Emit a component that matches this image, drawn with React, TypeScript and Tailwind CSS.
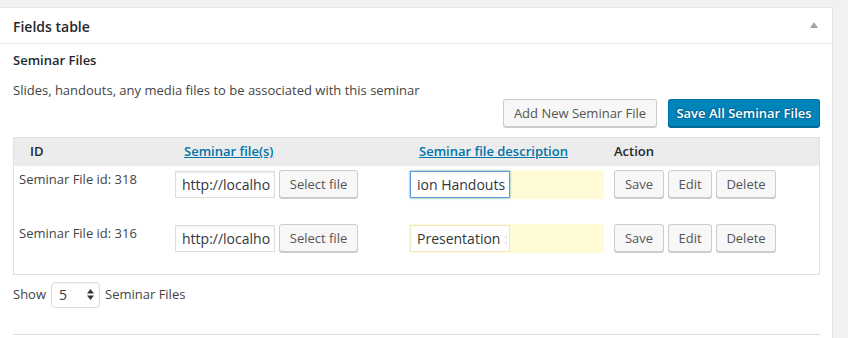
import React from 'react';

const font = { fontFamily: '"Open Sans", "Liberation Sans", sans-serif' };

const Btn = ({ children, className = '' }: { children: React.ReactNode; className?: string }) => (
  <button
    className={
      'h-[28px] rounded-[3px] border border-[#cccccc] bg-[#f7f7f7] text-[13px] text-[#555555] shadow-[0_1px_0_#cccccc] flex items-center justify-center leading-none ' +
      className
    }
  >
    {children}
  </button>
);

const rows = [
  { id: 318, desc: 'ion Handouts', focused: true },
  { id: 316, desc: 'Presentation', focused: false },
];

export default function App() {
  return (
    <div className="w-[848px] h-[338px] bg-[#f1f1f1] pt-[7px] overflow-hidden" style={font}>
      <div className="w-[833px] h-[331px] bg-white border-t border-r border-[#e5e5e5]">
        {/* header */}
        <div className="h-[36px] border-b border-[#eeeeee] flex items-center justify-between pl-[13px] pr-[14px]">
          <h2 className="text-[14px] font-semibold text-[#23282d] pt-[1px]">Fields table</h2>
          <svg width="8" height="6" viewBox="0 0 8 6" className="mt-[-2px]">
            <path d="M4 0 L8 6 L0 6 Z" fill="#a0a5aa" />
          </svg>
        </div>

        <div className="pl-[13px] pr-[12px] text-[#444444] text-[13px]">
          <div className="pt-[7px] h-[29px] font-semibold leading-[18px] text-[#23282d]">Seminar Files</div>
          <p className="mt-[8px] leading-[18px]">Slides, handouts, any media files to be associated with this seminar</p>

          <div className="flex justify-end gap-[11px]">
            <Btn className="w-[154px]">Add New Seminar File</Btn>
            <button className="w-[152px] h-[28px] rounded-[3px] border border-[#0073aa] border-b-[#006799] bg-[#0085ba] text-white font-semibold text-[13px] shadow-[0_1px_0_#006799] [text-shadow:0_-1px_1px_#006799,1px_0_1px_#006799,0_1px_1px_#006799,-1px_0_1px_#006799] leading-none">
              Save All Seminar Files
            </button>
          </div>

          {/* table */}
          <div className="mt-[10px] border border-[#e1e1e1] w-[807px]">
            <div className="grid grid-cols-[156px_234px_205px_1fr] h-[28px] items-center bg-[#ececec] font-semibold text-[13px] text-[#23282d]">
              <div className="pl-[16px]">ID</div>
              <div className="pl-[14px]">
                <a className="text-[#0073aa] underline">Seminar file(s)</a>
              </div>
              <div className="pl-[15px]">
                <a className="text-[#0073aa] underline">Seminar file description</a>
              </div>
              <div className="pl-[5px]">Action</div>
            </div>
            {rows.map((r) => (
              <div key={r.id} className="grid grid-cols-[156px_234px_205px_1fr] h-[54px] items-start pt-[4px]">
                <div className="pl-[5px] leading-[18px]">Seminar File id: {r.id}</div>
                <div className="pl-[5px] flex gap-[4px]">
                  <div className="w-[100px] h-[27px] mt-[1px] border border-[#dddddd] shadow-[inset_0_1px_2px_rgba(0,0,0,0.07)] pl-[6px] text-[14px] text-[#32373c] leading-[25px] overflow-hidden whitespace-nowrap">
                    http://localho
                  </div>
                  <Btn className="w-[79px]">Select file</Btn>
                </div>
                <div className="pl-[5px]">
                  <div className="w-[195px] h-[29px] bg-[#fefbd6] pl-[1px] pt-[1px]">
                    <div
                      className={
                        'w-[100px] h-[27px] pl-[6px] text-[14px] text-[#32373c] leading-[25px] overflow-hidden whitespace-nowrap bg-white ' +
                        (r.focused
                          ? 'border border-[#5b9dd9] shadow-[0_0_2px_rgba(30,140,190,0.8)]'
                          : 'border border-[#ece8c4]')
                      }
                    >
                      {r.desc}
                      {!r.focused && <span className="text-[#dcdcdc]"> :</span>}
                    </div>
                  </div>
                </div>
                <div className="pl-[5px] flex gap-[4px]">
                  <Btn className="w-[50px]">Save</Btn>
                  <Btn className="w-[44px]">Edit</Btn>
                  <Btn className="w-[60px]">Delete</Btn>
                </div>
              </div>
            ))}
          </div>

          {/* footer */}
          <div className="mt-[6px] flex items-center gap-[5px] h-[27px]">
            <span>Show</span>
            <div className="w-[49px] h-[26px] border border-[#dddddd] rounded-[4px] flex items-center justify-between pl-[7px] pr-[5px] text-[14px] text-[#32373c] shadow-[inset_0_1px_2px_rgba(0,0,0,0.04)]">
              <span>5</span>
              <svg width="7" height="11" viewBox="0 0 7 11">
                <path d="M3.5 0 L7 4.5 L0 4.5 Z" fill="#333" />
                <path d="M3.5 11 L7 6.5 L0 6.5 Z" fill="#333" />
              </svg>
            </div>
            <span>Seminar Files</span>
          </div>

          <div className="mt-[26px] border-t border-[#dddddd] w-[807px]" />
        </div>
      </div>
    </div>
  );
}
